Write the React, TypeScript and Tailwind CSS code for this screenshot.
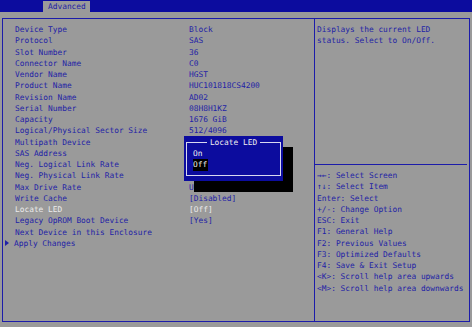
import React from "react";

const rows: [string, string][] = [
  ["Device Type", "Block"],
  ["Protocol", "SAS"],
  ["Slot Number", "36"],
  ["Connector Name", "C0"],
  ["Vendor Name", "HGST"],
  ["Product Name", "HUC101818CS4200"],
  ["Revision Name", "AD02"],
  ["Serial Number", "08H8H1KZ"],
  ["Capacity", "1676 GiB"],
  ["Logical/Physical Sector Size", "512/4096"],
  ["Multipath Device", ""],
  ["SAS Address", ""],
  ["Neg. Logical Link Rate", ""],
  ["Neg. Physical Link Rate", ""],
  ["Max Drive Rate", "U"],
  ["Write Cache", "[Disabled]"],
  ["Locate LED", "[Off]"],
  ["Legacy OpROM Boot Device", "[Yes]"],
  ["Next Device in this Enclosure", ""],
];

const keys = [
  "→←: Select Screen",
  "↑↓: Select Item",
  "Enter: Select",
  "+/-: Change Option",
  "ESC: Exit",
  "F1: General Help",
  "F2: Previous Values",
  "F3: Optimized Defaults",
  "F4: Save & Exit Setup",
  "<K>: Scroll help area upwards",
  "<M>: Scroll help area downwards",
];

export default function App() {
  return (
    <div
      className="relative h-[327px] w-[472px] overflow-hidden bg-[#9a9a9a] text-[7.85px] leading-[11.25px] text-[#2222a6]"
      style={{ fontFamily: '"DejaVu Sans Mono", "Liberation Mono", monospace' }}
    >
      {/* top bar */}
      <div className="flex h-[12px] bg-[#0c0c9e]">
        <div className="ml-[43px] mt-[1px] flex h-[11px] w-[47px] items-center bg-[#9a9a9a] pl-[5px]">
          Advanced
        </div>
      </div>

      {/* frame */}
      <div className="ml-[2px] mt-[6px] flex h-[304px] w-[468px] border border-[#1c1caa]">
        {/* left panel */}
        <div className="w-[311px] pl-[12px] pt-[5px]">
          {rows.map(([label, value]) => {
            const hot = label === "Locate LED";
            return (
              <div key={label} className={`flex h-[11.25px] ${hot ? "text-[#ececec]" : ""}`}>
                <span className="w-[174px] whitespace-pre">{label}</span>
                <span className="whitespace-pre">{value}</span>
              </div>
            );
          })}
          <div className="flex h-[11.25px] items-center">
            <span className="-ml-[10px] mr-[5px] h-0 w-0 border-y-[3px] border-l-[4px] border-y-transparent border-l-[#2222a6]" />
            <span>Apply Changes</span>
          </div>
        </div>

        {/* right panel */}
        <div className="flex flex-1 flex-col border-l border-[#1c1caa]">
          <div className="h-[145px] pl-[2px] pt-[5px]">
            <div>Displays the current LED</div>
            <div>status. Select to On/Off.</div>
          </div>
          <div className="mr-[2px] h-px bg-[#1c1caa]" />
          <div className="pl-[2px] pt-[5px]">
            {keys.map((k) => (
              <div key={k} className="h-[11.25px] whitespace-pre">
                {k}
              </div>
            ))}
          </div>
        </div>
      </div>

      {/* Locate LED popup */}
      <div className="absolute left-[184px] top-[136px] h-[45px] w-[99px] bg-[#0c0c9e] shadow-[10px_11px_0_#000] text-[#f0f0f0]">
        <div className="absolute left-[2px] right-[2px] top-[6px] bottom-[5px] border border-[#d8d8f0]" />
        <div className="absolute left-0 right-0 top-[1px] flex justify-center">
          <span className="bg-[#0c0c9e] px-[3px]">Locate LED</span>
        </div>
        <div className="absolute left-[9px] top-[12px]">
          <div className="h-[11.25px]">On</div>
          <div className="h-[11.25px]">
            <span className="inline-block h-[11.25px] bg-black pr-[1px]">Off</span>
          </div>
        </div>
      </div>
    </div>
  );
}
